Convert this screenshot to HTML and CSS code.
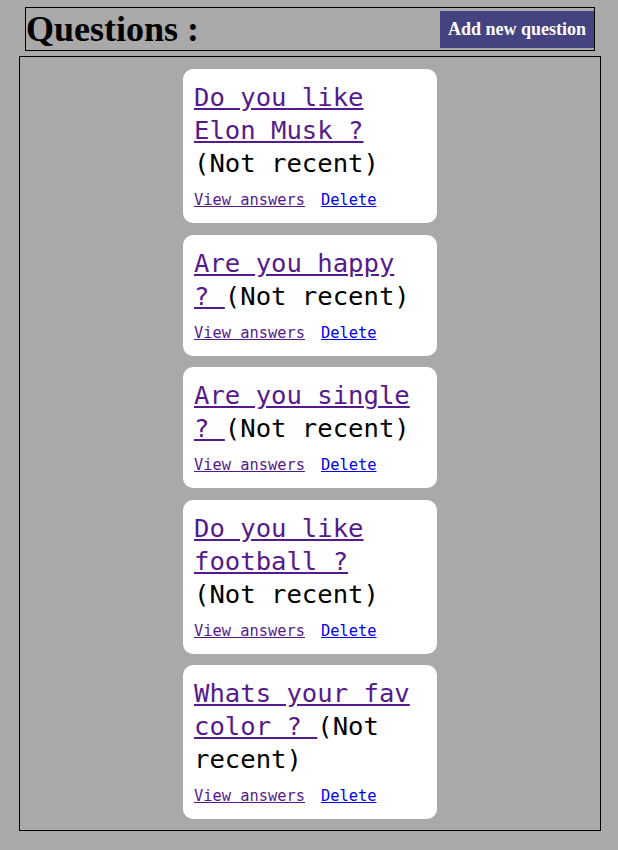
FILE: index.html
```html
<!DOCTYPE html>
<html>
<head>
<meta charset="utf-8">
<title>Questions</title>
<link rel="stylesheet" href="styles.css">
</head>
<body>
<header class="topbar">
  <h1 class="title">Questions :</h1>
  <button class="add-btn">Add new question</button>
</header>
<main class="list">
  <div class="card">
    <p class="q"><a class="q-link" href="#">Do you like Elon Musk ? </a>(Not recent)</p>
    <div class="actions"><a class="view" href="#">View answers</a><a class="del" href="#">Delete</a></div>
  </div>
  <div class="card">
    <p class="q"><a class="q-link" href="#">Are you happy ? </a>(Not recent)</p>
    <div class="actions"><a class="view" href="#">View answers</a><a class="del" href="#">Delete</a></div>
  </div>
  <div class="card">
    <p class="q"><a class="q-link" href="#">Are you single ? </a>(Not recent)</p>
    <div class="actions"><a class="view" href="#">View answers</a><a class="del" href="#">Delete</a></div>
  </div>
  <div class="card">
    <p class="q"><a class="q-link" href="#">Do you like football ? </a>(Not recent)</p>
    <div class="actions"><a class="view" href="#">View answers</a><a class="del" href="#">Delete</a></div>
  </div>
  <div class="card">
    <p class="q"><a class="q-link" href="#">Whats your fav color ? </a>(Not recent)</p>
    <div class="actions"><a class="view" href="#">View answers</a><a class="del" href="#">Delete</a></div>
  </div>
</main>
</body>
</html>
```
FILE: styles.css
```css
html, body {
  margin: 0;
  padding: 0;
  background: #a9a9a9;
}
body {
  font-family: "Liberation Serif", "Times New Roman", serif;
  padding-top: 7px;
}
.topbar {
  margin: 0 23px 5px 25px;
  border: 1px solid #000;
  height: 42px;
  display: flex;
  align-items: center;
  justify-content: space-between;
}
.title {
  margin: 0;
  font-size: 36px;
  font-weight: bold;
  color: #000;
  line-height: 40px;
}
.add-btn {
  font-family: "Liberation Serif", "Times New Roman", serif;
  font-weight: bold;
  font-size: 18px;
  color: #fff;
  background: #45437f;
  border: none;
  height: 37px;
  padding: 0 8px;
  margin: 0;
}
.list {
  margin: 0 17px 0 19px;
  border: 1px solid #000;
  padding: 12px 0 11px;
  display: flex;
  flex-direction: column;
  align-items: center;
  gap: 11.5px;
}
.card {
  width: 254px;
  box-sizing: border-box;
  background: #fff;
  border-radius: 10px;
  padding: 12px 20px 14px 11px;
  font-family: "DejaVu Sans Mono", monospace;
  font-size: 25.6px;
}
.q {
  margin: 0;
  line-height: 33px;
  color: #000;
}
.q-link {
  color: #551a8b;
}
.actions {
  margin-top: 11px;
  font-size: 15.36px;
  line-height: 18px;
  display: flex;
  gap: 16px;
}
.view {
  color: #551a8b;
}
.del {
  color: #0000ee;
}
```
